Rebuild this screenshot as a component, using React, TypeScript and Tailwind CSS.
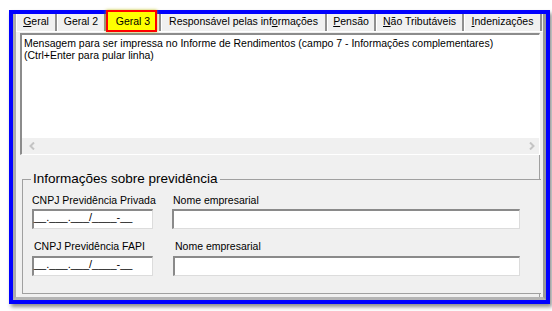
import React from 'react';

type Tab = { label: string; u?: number; w: string; active?: boolean };

const tabs: Tab[] = [
  { label: 'Geral', u: 0, w: 'w-[41px]' },
  { label: 'Geral 2', w: 'w-[49px]' },
  { label: 'Geral 3', w: 'w-[55px]', active: true },
  { label: 'Responsável pelas informações', u: 21, w: 'w-[166px]' },
  { label: 'Pensão', u: 0, w: 'w-[49px]' },
  { label: 'Não Tributáveis', u: 0, w: 'w-[88px]' },
  { label: 'Indenizações', u: 0, w: 'w-[78px]' },
];

// label with the accelerator letter underlined
const TabLabel = ({ label, u }: { label: string; u?: number }) => {
  if (u === undefined) return <>{label}</>;
  return (
    <>
      {label.slice(0, u)}
      <span className="underline">{label[u]}</span>
      {label.slice(u + 1)}
    </>
  );
};

const MaskInput = ({ mask }: { mask?: string }) => (
  <div className="h-[20px] bg-white border-t-[2px] border-l-[2px] border-t-[#8a8a8a] border-l-[#8a8a8a] border-r border-b border-r-[#dcdcdc] border-b-[#dcdcdc] text-[11px] leading-[13px] whitespace-pre">
    {mask}
  </div>
);

const App = () => {
  return (
    <div className="w-[552px] h-[311px] bg-white pt-[10px] pl-[9px] text-black font-['Liberation_Sans',Arial,sans-serif]">
      <div className="w-[541px] h-[294px] border-[4px] border-[#0000ff] shadow-[2px_3px_4px_rgba(0,0,0,0.45)]">
        <div className="h-full flex flex-col bg-[#f0f0f0] border-l-[3px] border-r-[3px] border-b-[3px] border-l-[#ababab] border-r-[#9a9a9a] border-b-[#b4b4b4]">
          {/* Tabs */}
          <div className="flex h-[17px] shrink-0">
            {tabs.map((t) => (
              <div
                key={t.label}
                className={`relative flex justify-center h-[17px] pt-[1px] text-[10.5px] leading-[13px] whitespace-nowrap border-l border-l-white border-r-[2px] border-r-[#8f8f8f] ${t.w}`}
              >
                {t.active && (
                  <span className="absolute left-[-1px] top-[-4px] w-[51px] h-[22px] bg-[#ffff00] border-[2px] border-[#ff0000] shadow-[0_0_3px_rgba(190,190,0,0.8)]" />
                )}
                <span className="relative">
                  <TabLabel label={t.label} u={t.u} />
                </span>
              </div>
            ))}
          </div>

          {/* Tab sheet */}
          <div className="flex-1 flex flex-col border-t border-white pl-[4px] pr-[3px] pt-[1px]">
            {/* Memo */}
            <div className="h-[122px] shrink-0 flex flex-col border-t-[2px] border-l-[2px] border-t-[#8c8c8c] border-l-[#8c8c8c] border-r border-b border-r-white border-b-white">
              <div className="flex-1 bg-white pl-[2px] pt-[2px] text-[10.5px] leading-[12px] whitespace-nowrap">
                <div>Mensagem para ser impressa no Informe de Rendimentos (campo 7 - Informações complementares)</div>
                <div>(Ctrl+Enter para pular linha)</div>
              </div>
              <div className="h-[16px] bg-[#f0f0f0] flex items-center justify-between pl-[7px] pr-[4px]">
                <svg width="6" height="8" viewBox="0 0 6 8">
                  <polyline points="5,0.5 1.5,4 5,7.5" fill="none" stroke="#c4c4c4" strokeWidth="2" />
                </svg>
                <svg width="6" height="8" viewBox="0 0 6 8">
                  <polyline points="1,0.5 4.5,4 1,7.5" fill="none" stroke="#c4c4c4" strokeWidth="2" />
                </svg>
              </div>
            </div>

            {/* Lower panel */}
            <div className="flex-1 border-r border-r-[#a0a0a0] pt-[16px]">
              <fieldset className="ml-[2px] mr-[-2px] h-[123px] border-t border-l border-b border-r-0 border-[#a0a0a0] bg-[#f0f0f0]">
                <legend className="ml-[8px] px-[2px] text-[13.5px] leading-[16px]">Informações sobre previdência</legend>
                <div className="pl-[9px] pt-[7px] grid grid-cols-[121px_348px] gap-x-[19px] text-[10.5px] leading-[13px] whitespace-nowrap">
                  <div>CNPJ Previdência Privada</div>
                  <div className="pl-[1px]">Nome empresarial</div>
                  <div className="mt-[2px]">
                    <MaskInput mask="__.___.___/____-__" />
                  </div>
                  <div className="mt-[2px]">
                    <MaskInput />
                  </div>
                  <div className="mt-[11px] pl-[2px]">CNPJ Previdência FAPI</div>
                  <div className="mt-[11px] pl-[3px]">Nome empresarial</div>
                  <div className="mt-[3px]">
                    <MaskInput mask="__.___.___/____-__" />
                  </div>
                  <div className="mt-[3px] pl-[1px]">
                    <MaskInput />
                  </div>
                </div>
              </fieldset>
            </div>
          </div>
        </div>
      </div>
    </div>
  );
};

export default App;
